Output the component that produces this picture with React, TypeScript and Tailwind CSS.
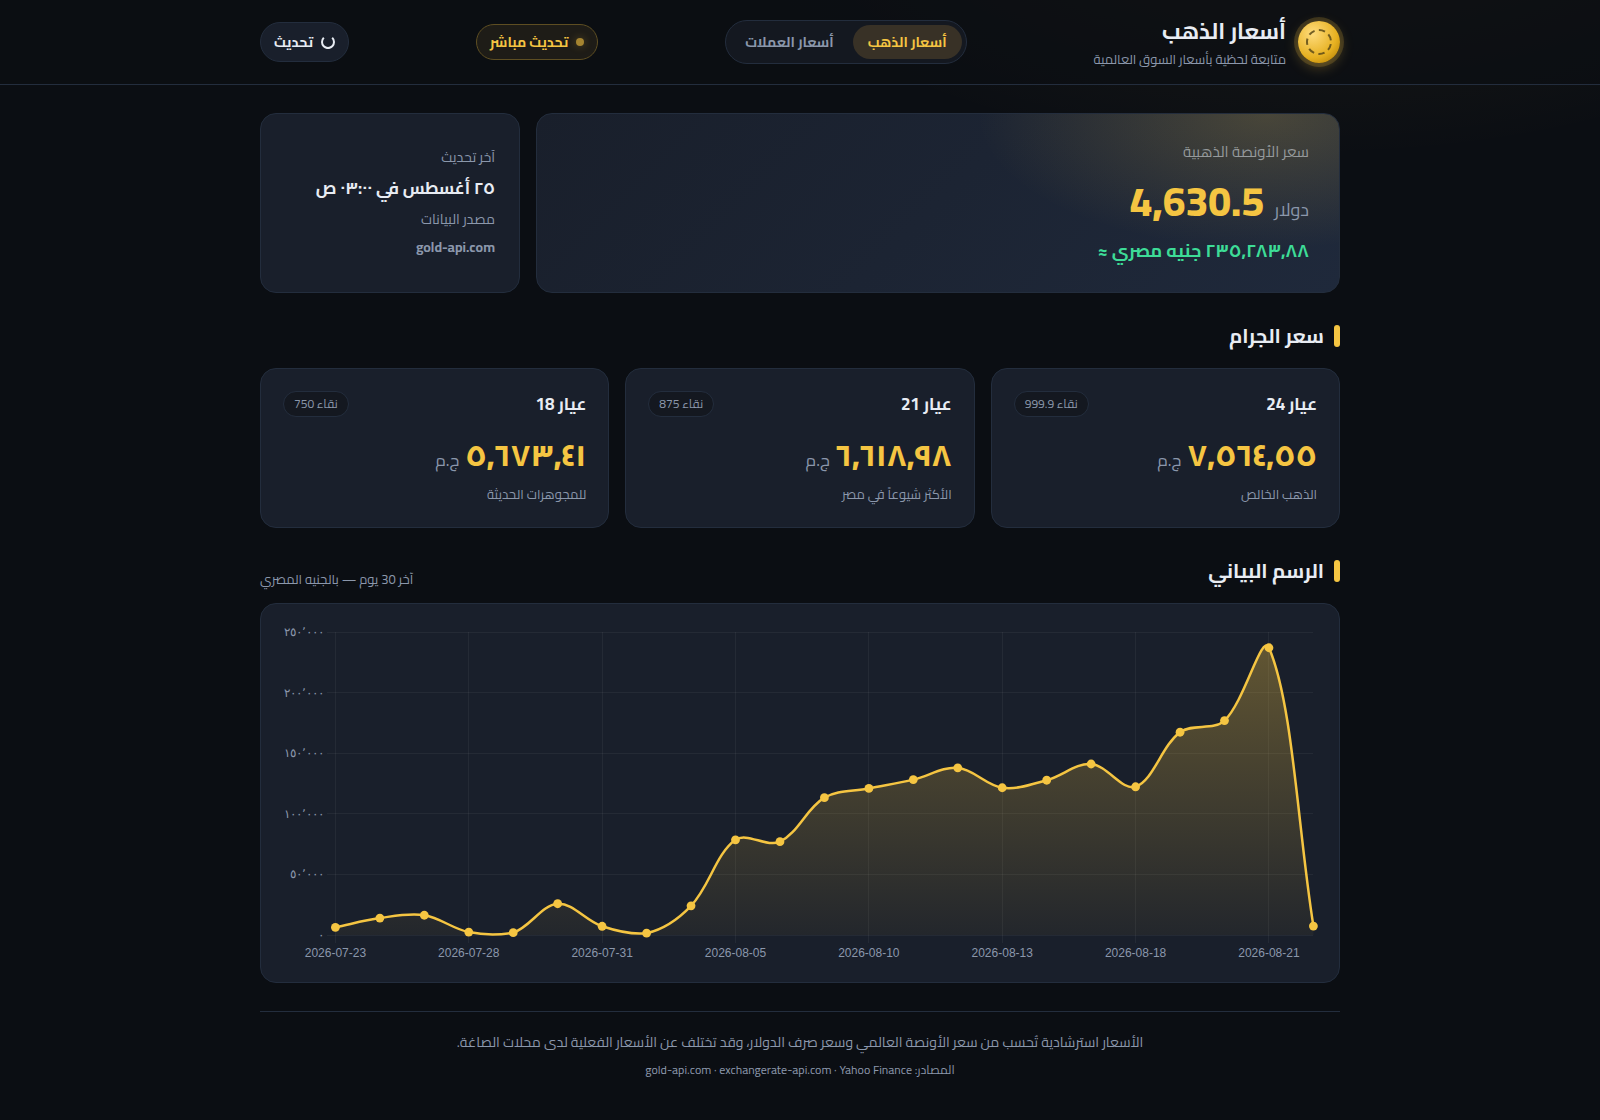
import { useState } from "react";

const karats = [
    { name: "عيار 24", purity: "نقاء 999.9", price: "٧,٥٦٤,٥٥", note: "الذهب الخالص" },
    { name: "عيار 21", purity: "نقاء 875", price: "٦,٦١٨,٩٨", note: "الأكثر شيوعاً في مصر" },
    { name: "عيار 18", purity: "نقاء 750", price: "٥,٦٧٣,٤١", note: "للمجوهرات الحديثة" },
];

const tabs = [
    { id: "gold", label: "أسعار الذهب" },
    { id: "currency", label: "أسعار العملات" },
];

// EGP value for each trading day
const history = [
    6300, 14000, 16300, 2400, 1900, 25800, 7200, 1500, 24100, 78500, 77000, 113300,
    120900, 128200, 137900, 121500, 127700, 141100, 122300, 167300, 176900, 237000, 7400,
];

const xLabels = [
    "2026-07-23", "2026-07-28", "2026-07-31", "2026-08-05",
    "2026-08-10", "2026-08-13", "2026-08-18", "2026-08-21",
];

const yLabels = ["٢٥٠٬٠٠٠", "٢٠٠٬٠٠٠", "١٥٠٬٠٠٠", "١٠٠٬٠٠٠", "٥٠٬٠٠٠", "٠"];

const area = { left: 54.4, right: 1032.4, top: 8, bottom: 311 };
const maxValue = 250000;
const tension = 0.35;

const points = history.map((value, i) => ({
    x: area.left + (i * (area.right - area.left)) / (history.length - 1),
    y: area.bottom - (value / maxValue) * (area.bottom - area.top),
}));

const clampY = (y: number) => Math.min(area.bottom, Math.max(area.top, y));

// control points before and after each point of the spline
const controls = points.map((cur, i) => {
    const prev = points[i - 1] ?? cur;
    const next = points[i + 1] ?? cur;
    const d01 = Math.hypot(cur.x - prev.x, cur.y - prev.y);
    const d12 = Math.hypot(next.x - cur.x, next.y - cur.y);
    const fa = (tension * d01) / (d01 + d12);
    const fb = (tension * d12) / (d01 + d12);
    return {
        before: { x: cur.x - fa * (next.x - prev.x), y: clampY(cur.y - fa * (next.y - prev.y)) },
        after: { x: cur.x + fb * (next.x - prev.x), y: clampY(cur.y + fb * (next.y - prev.y)) },
    };
});

const linePath = points
    .map((p, i) => {
        if (i === 0) return `M${p.x},${p.y}`;
        const a = controls[i - 1].after;
        const b = controls[i].before;
        return `C${a.x},${a.y} ${b.x},${b.y} ${p.x},${p.y}`;
    })
    .join(" ");

const areaPath = `${linePath} L${area.right},${area.bottom} L${area.left},${area.bottom} Z`;

function Coin() {
    return (
        <span className="flex size-[42px] shrink-0 items-center justify-center rounded-full bg-[radial-gradient(circle_at_35%_30%,#ffdc7c,#e6b020_60%,#a87400)] shadow-[0_0_0_4px_rgba(245,196,66,0.18),0_4px_14px_rgba(245,196,66,0.3)]">
            <svg width="26" height="26" viewBox="0 0 26 26" fill="none" aria-hidden="true">
                <circle cx="13" cy="13" r="12" stroke="#5c4a16" strokeOpacity="0.85" strokeWidth="2" strokeDasharray="6.4 4.37" strokeDashoffset="-2.2" />
            </svg>
        </span>
    );
}

function SectionTitle({ children }: { children: React.ReactNode }) {
    return (
        <h2 className="flex items-center gap-2.5 text-xl leading-8 font-bold">
            <span className="h-[22px] w-1.5 rounded-[3px] bg-[#f5c542]" />
            {children}
        </h2>
    );
}

function PriceChart() {
    return (
        <svg viewBox="0 0 1038 338" className="block h-auto w-full" role="img" aria-label="الرسم البياني">
            <defs>
                <linearGradient id="gold-fill" gradientUnits="userSpaceOnUse" x1="0" y1="0" x2="0" y2="338">
                    <stop offset="0" stopColor="#f5c542" stopOpacity="0.35" />
                    <stop offset="1" stopColor="#f5c542" stopOpacity="0.02" />
                </linearGradient>
            </defs>
            <g stroke="#ffffff" strokeOpacity="0.05" shapeRendering="crispEdges">
                {yLabels.map((label, i) => {
                    const y = area.top + (i * (area.bottom - area.top)) / 5;
                    return <line key={label} x1={area.left - 8} x2={area.right} y1={y} y2={y} />;
                })}
                {xLabels.map((label, i) => {
                    const x = points[i * 3].x;
                    return <line key={label} x1={x} x2={x} y1={area.top} y2={area.bottom + 8} />;
                })}
            </g>
            <path d={areaPath} fill="url(#gold-fill)" />
            <path d={linePath} fill="none" stroke="#f5c542" strokeWidth="2.5" />
            {points.map((p) => (
                <circle key={p.x} cx={p.x} cy={p.y} r="4.4" fill="#f5c542" />
            ))}
            <g className="fill-[#8b97ab] font-['Liberation_Sans',Arial,sans-serif] text-[12px]" direction="ltr">
                {yLabels.map((label, i) => (
                    <text key={label} x={area.left - 11} y={area.top + 4 + (i * (area.bottom - area.top)) / 5} textAnchor="end">
                        {label}
                    </text>
                ))}
                {xLabels.map((label, i) => (
                    <text key={label} x={points[i * 3].x} y="333" textAnchor="middle">
                        {label}
                    </text>
                ))}
            </g>
        </svg>
    );
}

export default function App() {
    const [tab, setTab] = useState("gold");

    return (
        <div
            dir="rtl"
            className="min-h-screen bg-[#0b0e13] bg-[radial-gradient(1000px_450px_at_82%_-112px,rgba(245,196,66,0.08),transparent_60%)] font-[Cairo,'Noto_Sans_Arabic','Noto_Sans','DejaVu_Sans',sans-serif] text-[#e8ecf3]"
        >
            <header className="border-b border-[#232d3d] bg-[#0b0e13]/70">
                <div className="mx-auto flex max-w-[1120px] flex-wrap items-center justify-between gap-4 px-5 py-3.5">
                    <div className="flex items-center gap-3">
                        <Coin />
                        <div>
                            <h1 className="text-[22px] leading-[35px] font-bold">أسعار الذهب</h1>
                            <p className="text-[13px] leading-[21px] text-[#8b97ab]">متابعة لحظية بأسعار السوق العالمية</p>
                        </div>
                    </div>

                    <nav className="flex gap-1 rounded-full border border-[#232d3d] bg-[#141820] p-1">
                        {tabs.map((item) => (
                            <button
                                key={item.id}
                                type="button"
                                onClick={() => setTab(item.id)}
                                className={`h-[34px] rounded-full px-[15px] text-sm font-bold ${tab === item.id ? "bg-[#383126] text-[#f5c542]" : "text-[#8b97ab]"}`}
                            >
                                {item.label}
                            </button>
                        ))}
                    </nav>

                    <div className="flex h-9 items-center gap-2 rounded-full border border-[#5e4e22] bg-[#1e1c17] px-[13px] text-sm font-bold text-[#f5c542]">
                        <span className="size-2 rounded-full bg-[#a58430] shadow-[0_0_8px_rgba(245,196,66,0.3)]" />
                        تحديث مباشر
                    </div>

                    <button type="button" className="flex h-10 items-center gap-2 rounded-full border border-[#232d3d] bg-[#191f2b] px-[13px] text-sm font-bold">
                        <svg width="14" height="14" viewBox="0 0 14 14" fill="none" stroke="currentColor" strokeWidth="2" aria-hidden="true">
                            <path d="M2.8 2.8A6 6 0 1 0 11.2 2.8" />
                        </svg>
                        تحديث
                    </button>
                </div>
            </header>

            <main className="mx-auto max-w-[1120px] px-5 pt-7">
                <section className="grid gap-4 md:grid-cols-[1fr_260px]">
                    <div className="rounded-2xl border border-[#232d3d] bg-[radial-gradient(290px_135px_at_91%_0%,rgba(245,196,66,0.2),transparent),linear-gradient(135deg,#191f2b,#1f293b)] px-[30px] py-6">
                        <p className="text-[15px] leading-7 text-[#969a9c]">سعر الأونصة الذهبية</p>
                        <p className="mt-0.5 flex items-baseline gap-2.5 leading-[66px]">
                            <span className="text-lg leading-6 text-[#8b97ab]">دولار</span>
                            <span className="text-[41px] font-extrabold text-[#f5c542]">4,630.5</span>
                        </p>
                        <p className="text-lg leading-[34px] font-bold text-[#3ddc97]">٢٣٥,٢٨٣,٨٨ جنيه مصري ≈</p>
                    </div>
                    <div className="flex flex-col justify-center gap-1.5 rounded-2xl border border-[#232d3d] bg-[#191f2b] px-6 pt-5 pb-[22px]">
                        <p className="text-sm leading-[22px] text-[#8b97ab]">آخر تحديث</p>
                        <p className="text-[17px] leading-7 font-bold">٢٥ أغسطس في ٠٣:٠٠ ص</p>
                        <p className="text-sm leading-[22px] text-[#8b97ab]">مصدر البيانات</p>
                        <p className="text-sm leading-[22px] font-bold text-[#8b97ab]">gold-api.com</p>
                    </div>
                </section>

                <section className="mt-[27px]">
                    <SectionTitle>سعر الجرام</SectionTitle>
                    <div className="mt-4 grid gap-4 md:grid-cols-3">
                        {karats.map((karat) => (
                            <article key={karat.name} className="rounded-2xl border border-[#232d3d] bg-[#191f2b] p-[22px]">
                                <div className="flex items-center justify-between">
                                    <h3 className="text-[17px] leading-[26px] font-bold">{karat.name}</h3>
                                    <span className="rounded-full border border-[#232d3d] bg-[#141820] px-2.5 text-xs leading-6 text-[#8b97ab]">
                                        {karat.purity}
                                    </span>
                                </div>
                                <p className="mt-3 flex items-baseline gap-1.5">
                                    <span className="text-3xl leading-[52px] font-extrabold text-[#f5c542]">{karat.price}</span>
                                    <span className="text-[17px] leading-6 text-[#8b97ab]">ج.م</span>
                                </p>
                                <p className="mt-0.5 text-[13px] leading-[22px] text-[#8b97ab]">{karat.note}</p>
                            </article>
                        ))}
                    </div>
                </section>

                <section className="mt-[27px]">
                    <div className="flex items-end justify-between">
                        <SectionTitle>الرسم البياني</SectionTitle>
                        <p className="text-[13px] leading-4 text-[#8b97ab]">آخر 30 يوم — بالجنيه المصري</p>
                    </div>
                    <div className="mt-4 rounded-2xl border border-[#232d3d] bg-[#191f2b] p-5">
                        <PriceChart />
                    </div>
                </section>

                <footer className="mt-7 border-t border-[#232d3d] py-5 text-center text-[#8b97ab]">
                    <p className="text-sm leading-[21px]">
                        الأسعار استرشادية تُحسب من سعر الأونصة العالمي وسعر صرف الدولار، وقد تختلف عن الأسعار الفعلية لدى محلات الصاغة.
                    </p>
                    <p className="mt-[7px] text-xs leading-5">المصادر: gold-api.com · exchangerate-api.com · Yahoo Finance</p>
                </footer>
            </main>
        </div>
    );
}
